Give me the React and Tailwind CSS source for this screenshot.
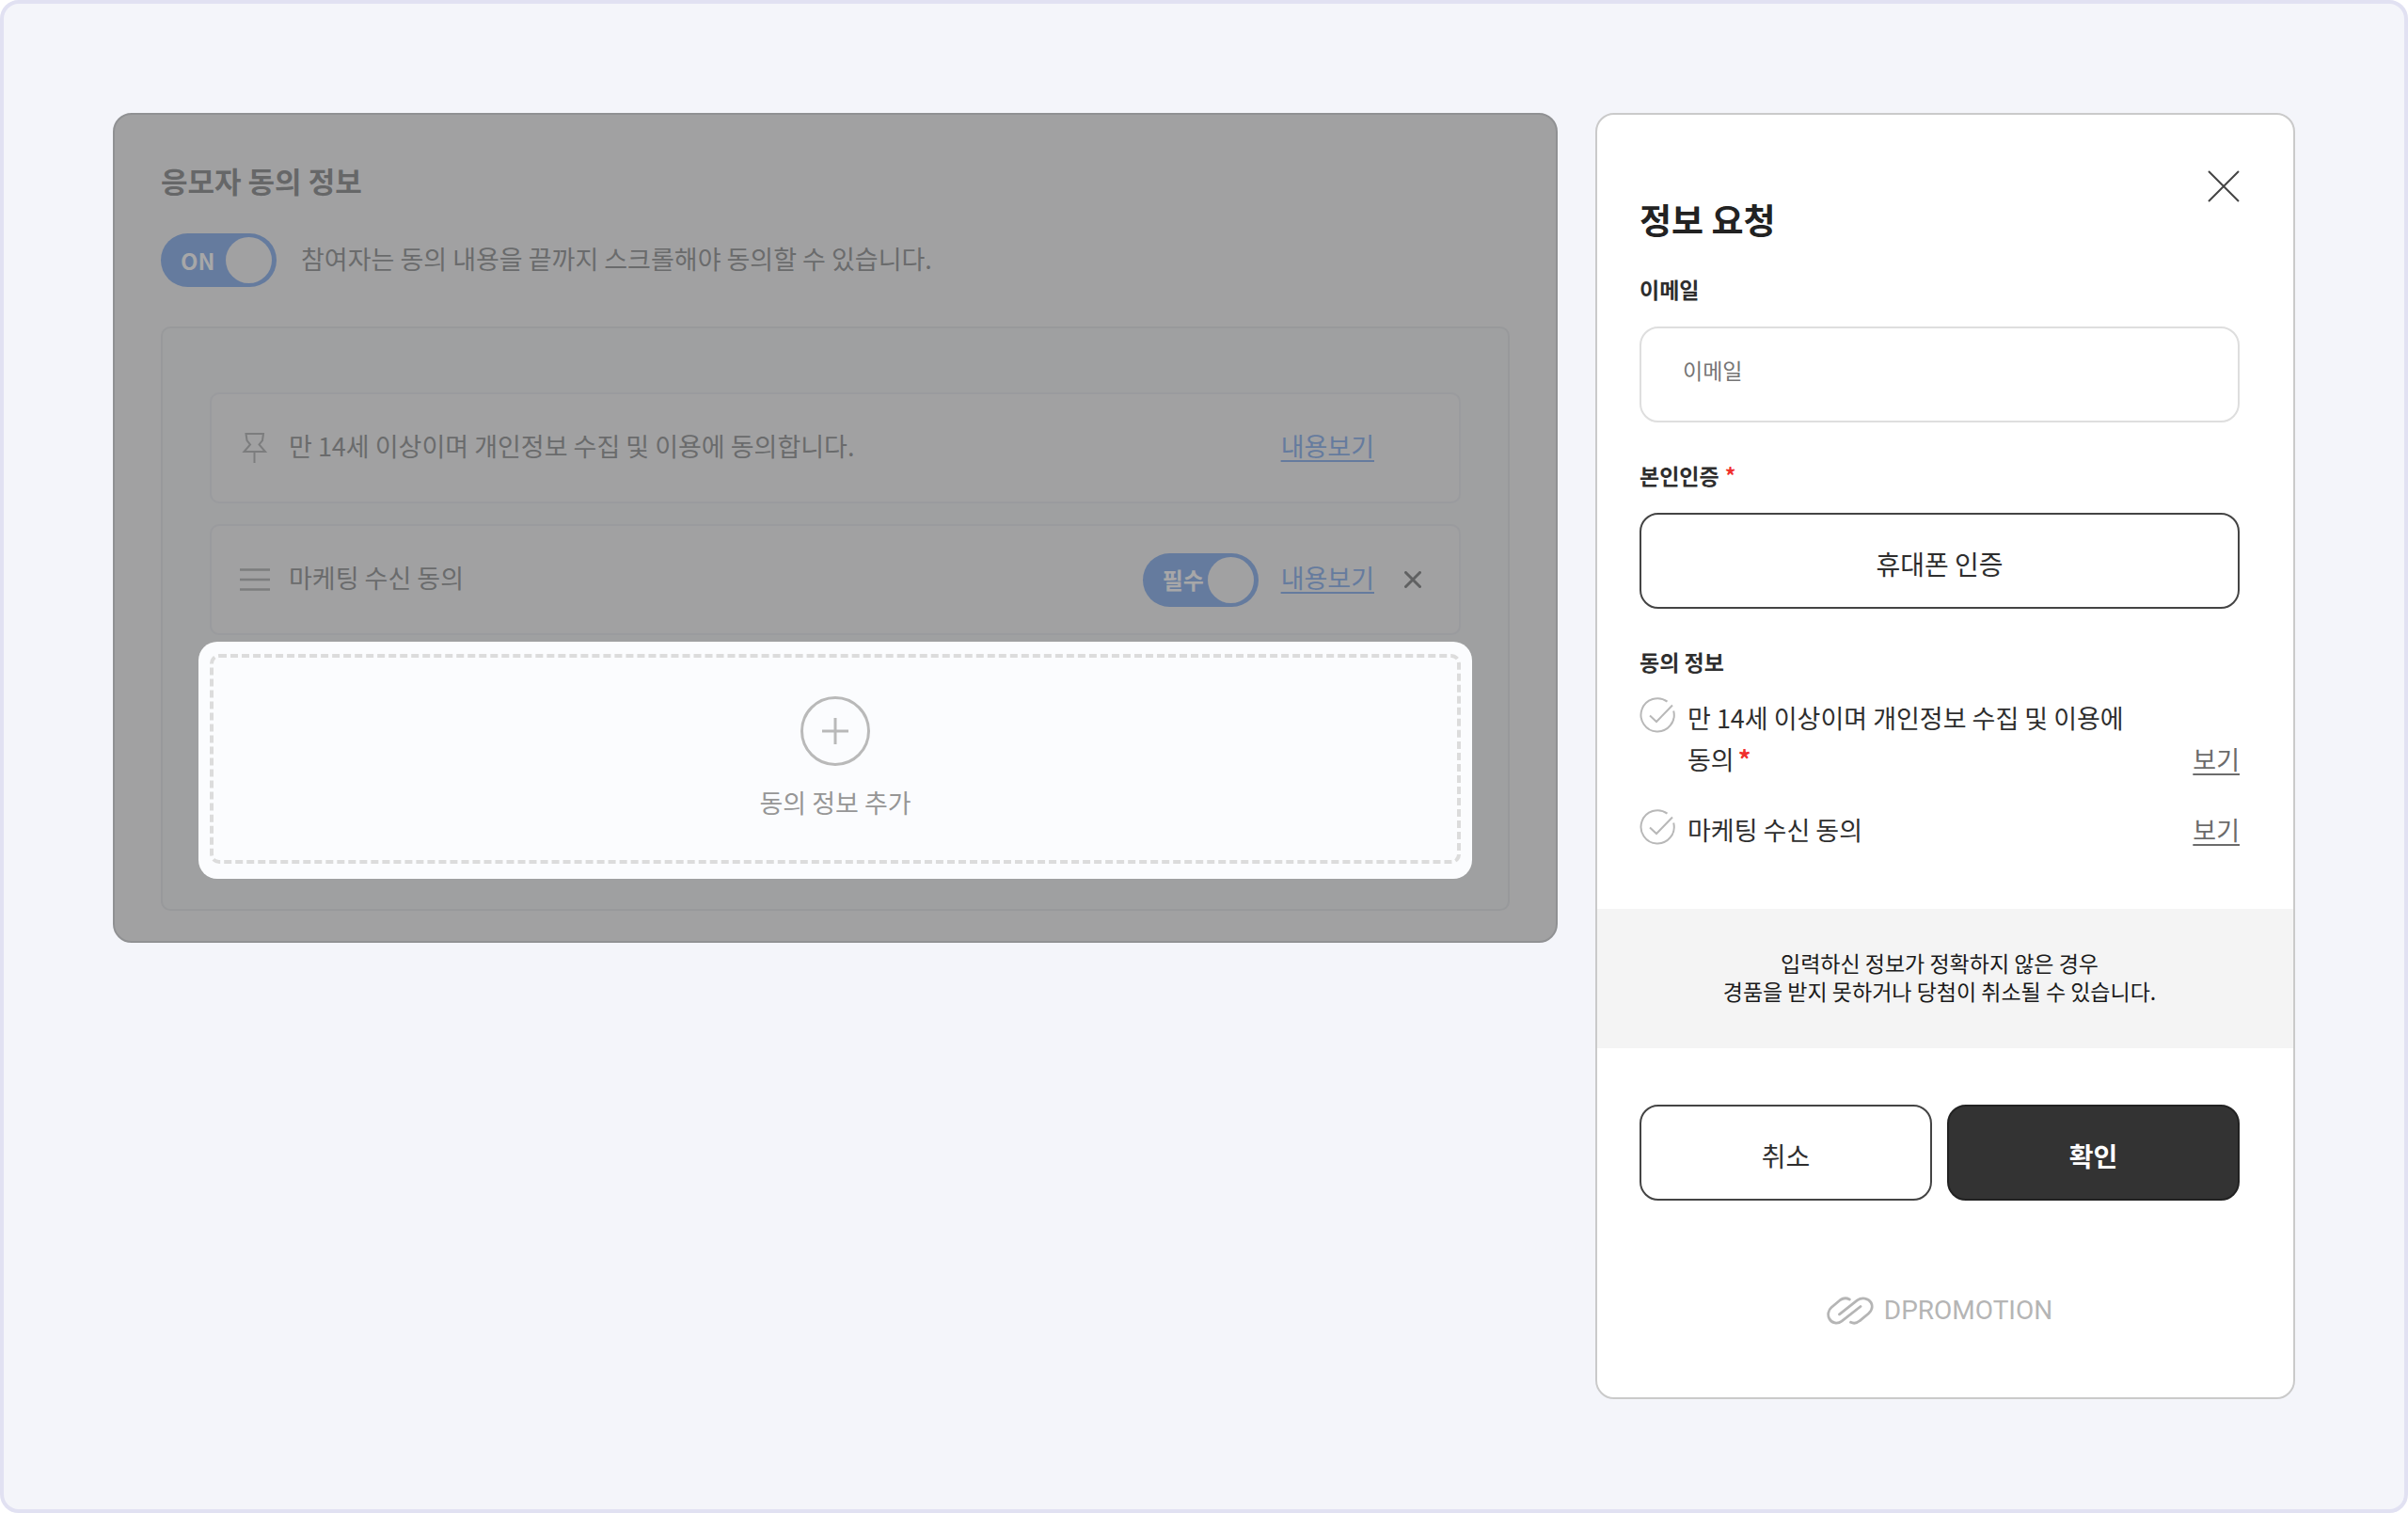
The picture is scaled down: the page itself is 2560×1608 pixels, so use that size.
import { useState } from 'react';

function Switch({ label, name, defaultOn = true }) {
  const [on, setOn] = useState(defaultOn);

  return (
    <label className="relative flex h-[57px] w-[123px] shrink-0 cursor-pointer items-center justify-between rounded-full bg-[#657b9e] pl-[21px] pr-[5px]">
      <input
        type="checkbox"
        role="switch"
        aria-label={name}
        checked={on}
        onChange={(e) => setOn(e.target.checked)}
        className="sr-only"
      />
      <span className="text-2xl font-bold text-[#a7a7a8]">{label}</span>
      <span className="h-[49px] w-[49px] rounded-full bg-[#a1a1a2]" />
    </label>
  );
}

function PinIcon() {
  return (
    <svg viewBox="0 0 32 34" className="h-[34px] w-8 shrink-0" fill="none" stroke="#7c7d7e" strokeWidth="2" aria-hidden="true">
      <path d="M6.500 2h18.500l-1 7-3.500 4.500 6.500 7.500H4.500l6.500-7.500L7.500 9z" />
      <path d="M15.500 21v12" />
    </svg>
  );
}

function DragIcon() {
  return (
    <svg viewBox="0 0 32 34" className="h-[34px] w-8 shrink-0" stroke="#7c7d7e" strokeWidth="2.300" aria-hidden="true">
      <path d="M0 6.500h32M0 17h32M0 27.500h32" />
    </svg>
  );
}

function ConsentRow({ icon, text, children }) {
  return (
    <li className="flex h-[118px] items-center gap-5 rounded-[10px] border-2 border-[#9a9b9e] bg-[#a1a1a2] pl-[30px] pr-10">
      {icon}
      <span className="flex-1 pb-1">{text}</span>
      {children}
    </li>
  );
}

function ContentLink() {
  return (
    <a href="#content" className="pb-1 text-[#657b9e] underline decoration-2 underline-offset-4">
      내용보기
    </a>
  );
}

function CheckItem({ id, children }) {
  return (
    <li className="flex items-end justify-between">
      <label htmlFor={id} className="relative flex cursor-pointer items-start gap-[13px]">
        <input id={id} type="checkbox" className="sr-only" />
        <svg viewBox="0 0 38 38" className="h-[38px] w-[38px] shrink-0" fill="none" stroke="#b8b8b8" strokeWidth="2" aria-hidden="true">
          <path d="M29.500 4.600A17.600 17.600 0 1 0 36.200 14.500" />
          <path d="M11 19.500l7 6.500L35 8.500" />
        </svg>
        <span>{children}</span>
      </label>
      <a href={`#${id}-detail`} className="text-[#6b6b6b] underline decoration-2 underline-offset-4">
        보기
      </a>
    </li>
  );
}

function AdminPanel() {
  return (
    <section className="min-w-0 flex-1 rounded-[20px] border-2 border-[#909193] bg-[#a1a1a2] px-[49px] pb-8 pt-12 text-[27px] leading-10 text-[#6a6b6c]">
      <h2 className="text-[31px] font-bold leading-[44px] text-[#666768]">응모자 동의 정보</h2>

      <div className="mt-[34px] flex items-center gap-[26px]">
        <Switch label="ON" name="끝까지 스크롤" />
        <p className="pb-1">참여자는 동의 내용을 끝까지 스크롤해야 동의할 수 있습니다.</p>
      </div>

      <div className="mt-[42px] rounded-[10px] border-2 border-[#98999b] bg-[#9fa0a1] px-[50px] pb-8 pt-[68px]">
        <ul className="flex flex-col gap-[22px]">
          <ConsentRow icon={<PinIcon />} text="만 14세 이상이며 개인정보 수집 및 이용에 동의합니다.">
            <div className="flex items-center gap-8">
              <ContentLink />
              <span className="w-[18px]" />
            </div>
          </ConsentRow>
          <ConsentRow icon={<DragIcon />} text="마케팅 수신 동의">
            <div className="flex items-center gap-8">
              <div className="flex items-center gap-6">
                <Switch label="필수" name="필수 동의" />
                <ContentLink />
              </div>
              <button type="button" aria-label="삭제">
                <svg viewBox="0 0 18 18" className="h-[18px] w-[18px]" stroke="#606162" strokeWidth="3" strokeLinecap="round">
                  <path d="M1.500 1.500l15 15M16.500 1.500l-15 15" />
                </svg>
              </button>
            </div>
          </ConsentRow>
        </ul>

        {/* highlighted area */}
        <div className="-mx-3 mt-[7px] rounded-[20px] bg-[#fbfcfe] px-3 pb-4 pt-[13px]">
          <button
            type="button"
            className="flex w-full flex-col items-center gap-[19px] rounded-[10px] border-4 border-dashed border-[#dcdcdc] pb-[41px] pt-[41px] text-[#969696]"
          >
            <svg viewBox="0 0 74 74" className="h-[74px] w-[74px]" fill="none" stroke="#b9b9b9" strokeWidth="3" aria-hidden="true">
              <circle cx="37" cy="37" r="35.500" />
              <path d="M37 23v28M23 37h28" />
            </svg>
            동의 정보 추가
          </button>
        </div>
      </div>
    </section>
  );
}

function RequestForm() {
  return (
    <form className="w-[744px] shrink-0 rounded-[20px] border-2 border-[#cacaca] bg-white pb-[77px] pt-[59px] text-[27px] leading-[44px] text-[#2e2e2e]">
      <div className="pl-[45px] pr-[57px]">
        <div className="flex items-start justify-between">
          <h2 className="pt-[30px] text-[37px] font-bold text-[#222]">정보 요청</h2>
          <button type="button" aria-label="닫기">
            <svg viewBox="0 0 34 34" className="h-[34px] w-[34px]" stroke="#444" strokeWidth="2">
              <path d="M1 1l32 32M33 1L1 33" />
            </svg>
          </button>
        </div>

        <label htmlFor="email" className="mt-9 block text-[23px] font-bold leading-8">이메일</label>
        <input
          id="email"
          type="email"
          placeholder="이메일"
          className="mt-6 block h-[102px] w-full rounded-[20px] border-2 border-[#dedede] px-11 pb-2.5 text-[23px] placeholder-[#757575]"
        />

        <h3 className="mt-10 text-[23px] font-bold leading-8">
          본인인증<span className="ml-1.5 text-[#f0302c]">*</span>
        </h3>
        <button type="button" className="mt-6 block h-[102px] w-full rounded-[20px] border-2 border-[#444] pt-1.5 text-[28px]">
          휴대폰 인증
        </button>

        <h3 className="mt-10 text-[23px] font-bold leading-8">동의 정보</h3>
        <ul className="mt-[22px] flex flex-col gap-[31px]">
          <CheckItem id="privacy">
            만 14세 이상이며 개인정보 수집 및 이용에
            <br />
            동의<span className="ml-1 font-bold text-[#f0302c]">*</span>
          </CheckItem>
          <CheckItem id="marketing">마케팅 수신 동의</CheckItem>
        </ul>
      </div>

      <p className="mt-[62px] bg-[#f4f4f4] pb-[46px] pl-[45px] pr-[57px] pt-[42px] text-center text-[23px] leading-[30px] text-[#1a1a1a]">
        입력하신 정보가 정확하지 않은 경우
        <br />
        경품을 받지 못하거나 당첨이 취소될 수 있습니다.
      </p>

      <div className="pl-[45px] pr-[57px]">
        <div className="mt-[60px] grid grid-cols-2 gap-4 text-[28px]">
          <button type="button" className="h-[102px] rounded-[20px] border-2 border-[#444] pt-1.5">취소</button>
          <button type="submit" className="h-[102px] rounded-[20px] border-2 border-[#222] bg-[#333] pt-1.5 font-bold text-white">확인</button>
        </div>

        <div className="mt-[102px] flex h-[30px] items-center justify-center gap-[11px] text-[#b5b5b5]">
          <svg viewBox="0 0 50 30" className="h-[30px] w-[50px]" fill="none" stroke="currentColor" strokeWidth="2.800" strokeLinecap="round" aria-hidden="true">
            <path d="M24.300 3C21 1.200 17.500 1.400 14.500 3.500L5 11.500C1.500 14.500 .8 19.500 2.800 23.500C5.500 28.500 11.500 29.500 16 26.200L36 10.500" />
            <path d="M13.500 18.800L32.500 3.800C37.500 .4 44.500 1.600 47.200 6.500C49.200 10.500 48 15 44.500 18L35 25.800C32 28.400 28.500 28.800 25.500 27.300" />
          </svg>
          <span className="font-['Roboto',sans-serif] text-[28px]">DPROMOTION</span>
        </div>
      </div>
    </form>
  );
}

export default function App() {
  return (
    <main className="flex min-h-screen items-start gap-10 rounded-[20px] border-4 border-[#e1e1f2] bg-[#f4f5fa] p-[116px] font-['Noto_Sans_CJK_KR',sans-serif]">
      <AdminPanel />
      <RequestForm />
    </main>
  );
}
